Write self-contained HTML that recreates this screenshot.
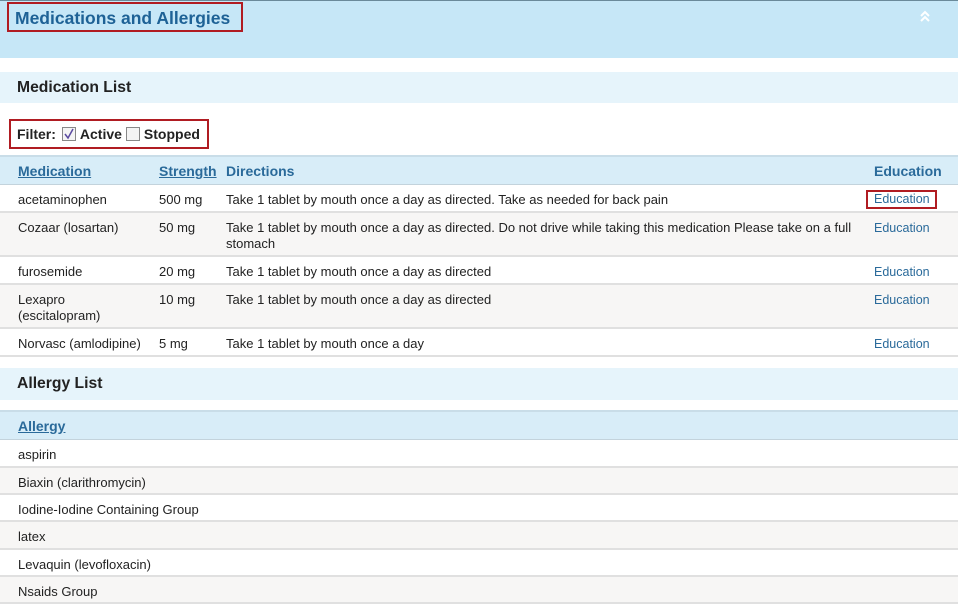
<!DOCTYPE html>
<html><head><meta charset="utf-8"><style>
*{margin:0;padding:0;box-sizing:border-box}
body{width:958px;height:598px;overflow:hidden;background:#fff;font-family:"Liberation Sans",Arial,sans-serif;position:relative;color:#222}
.a{position:absolute}
.hdr{left:0;top:0;width:958px;height:58px;background:#c6e7f7;border-top:1px solid #6a8a9a}
.title{left:7px;top:2px;width:236px;height:30px;border:2px solid #b01c22;font-weight:bold;font-size:17.5px;color:#1e6296;padding:4px 0 0 6px;white-space:nowrap}
.band{left:0;width:958px;height:31px;background:#e6f4fb;font-weight:bold;font-size:15.7px;color:#222;padding:7px 0 0 17px}
.filter{left:9px;top:119px;width:200px;height:30px;border:2px solid #b01c22;font-size:14px;font-weight:bold;padding:5px 0 0 6px;white-space:nowrap}
.cb{display:inline-block;width:14px;height:14px;border:1px solid #888;background:#f4f4f4;vertical-align:-2px;margin:0 4px 0 6px;position:relative}
.th{left:0;width:958px;height:30px;background:#d8edf8;border-top:2px solid #c9dde8;border-bottom:1px solid #c3d3dc;font-weight:bold;font-size:14px;color:#2a6a9a}
.th span{position:absolute;top:6px}
.th u{color:#2a6a9a}
.row{left:0;width:958px;border-bottom:2px solid #e0e0e0;font-size:13px;color:#222;line-height:16px}
.row span{position:absolute;top:7px;white-space:nowrap}
.g{background:#f7f6f5}
.ed{color:#2a6a9a;font-size:12.5px}
</style></head><body>
<div class="a hdr"></div>
<div class="a title">Medications and Allergies</div>
<svg class="a" style="left:919px;top:10px" width="12" height="12"><path d="M2 6 L6 2 L10 6 M2 11 L6 7 L10 11" stroke="#fff" stroke-width="2" fill="none"/></svg>
<div class="a band" style="top:72px">Medication List</div>
<div class="a filter">Filter:<span class="cb"><svg width="12" height="12" style="position:absolute;left:0;top:0"><path d="M2 6 L5 10 L10 1" stroke="#5a4aa0" stroke-width="1.5" fill="none"/></svg></span>Active<span class="cb" style="margin-left:4px"></span>Stopped</div>
<div class="a th" style="top:155px"><span style="left:18px"><u>Medication</u></span><span style="left:159px"><u>Strength</u></span><span style="left:226px">Directions</span><span style="left:874px">Education</span></div>
<div class="a row" style="top:185px;height:28px"><span style="left:18px">acetaminophen</span><span style="left:159px">500 mg</span><span style="left:226px">Take 1 tablet by mouth once a day as directed. Take as needed for back pain</span><span class="ed" style="left:866px;top:5px;border:2px solid #b01c22;padding:0 5px 0 6px;height:19px;line-height:15px">Education</span></div>
<div class="a row g" style="top:213px;height:44px"><span style="left:18px">Cozaar (losartan)</span><span style="left:159px">50 mg</span><span style="left:226px">Take 1 tablet by mouth once a day as directed. Do not drive while taking this medication Please take on a full<br>stomach</span><span class="ed" style="left:874px">Education</span></div>
<div class="a row" style="top:257px;height:28px"><span style="left:18px">furosemide</span><span style="left:159px">20 mg</span><span style="left:226px">Take 1 tablet by mouth once a day as directed</span><span class="ed" style="left:874px">Education</span></div>
<div class="a row g" style="top:285px;height:44px"><span style="left:18px">Lexapro<br>(escitalopram)</span><span style="left:159px">10 mg</span><span style="left:226px">Take 1 tablet by mouth once a day as directed</span><span class="ed" style="left:874px">Education</span></div>
<div class="a row" style="top:329px;height:28px"><span style="left:18px">Norvasc (amlodipine)</span><span style="left:159px">5 mg</span><span style="left:226px">Take 1 tablet by mouth once a day</span><span class="ed" style="left:874px">Education</span></div>
<div class="a band" style="top:368px;height:32px">Allergy List</div>
<div class="a th" style="top:410px"><span style="left:18px"><u>Allergy</u></span></div>
<div class="a row" style="top:440px;height:28px"><span style="left:18px">aspirin</span></div>
<div class="a row g" style="top:468px;height:27px"><span style="left:18px">Biaxin (clarithromycin)</span></div>
<div class="a row" style="top:495px;height:27px"><span style="left:18px">Iodine-Iodine Containing Group</span></div>
<div class="a row g" style="top:522px;height:28px"><span style="left:18px">latex</span></div>
<div class="a row" style="top:550px;height:27px"><span style="left:18px">Levaquin (levofloxacin)</span></div>
<div class="a row g" style="top:577px;height:27px"><span style="left:18px">Nsaids Group</span></div>
</body></html>
